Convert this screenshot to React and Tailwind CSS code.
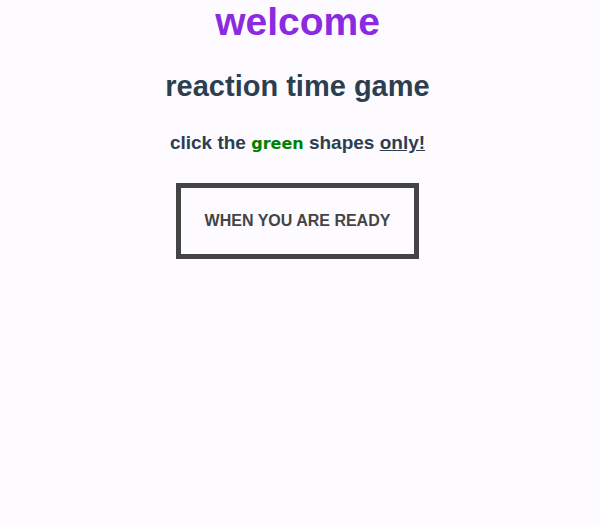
import React from 'react';

const App = () => {
    return (
        <div className="min-h-[524px] w-full bg-[#fdfbff] text-[#2c3e50] flex flex-col items-center pr-[5px] font-['Liberation_Sans',Arial,sans-serif]">
            <h1 className="text-[39px] leading-[44px] font-bold text-[#8a2be2]">welcome</h1>
            <h2 className="mt-[25px] text-[29px] leading-[34px] font-bold">reaction time game</h2>
            <p className="mt-[28px] text-[19px] leading-[24px] font-bold">
                click the <span className="text-[#008000] font-['DejaVu_Sans',sans-serif] text-[16px]">green</span> shapes <span className="underline">only!</span>
            </p>
            <button className="mt-[27px] border-[5px] border-[#444] px-[24px] py-[24px] text-[16px] leading-[18px] font-bold text-[#444] bg-transparent">
                WHEN YOU ARE READY
            </button>
        </div>
    );
};

export default App;
